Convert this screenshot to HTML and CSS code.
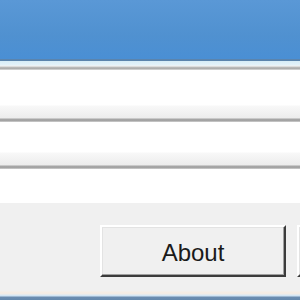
FILE: index.html
```html
<!DOCTYPE html>
<html>
<head>
<meta charset="utf-8">
<link rel="stylesheet" href="styles.css">
</head>
<body>
<div class="window">
  <div class="titlebar"></div>
  <div class="titleedge"></div>
  <div class="field"></div>
  <div class="field second"></div>
  <div class="gap"></div>
  <div class="panel">
    <button class="btn">About</button>
    <button class="btn"></button>
  </div>
  <div class="bottomedge"></div>
</div>
</body>
</html>
```

FILE: styles.css
```css
html, body {
  margin: 0;
  padding: 0;
  background: #ffffff;
}
.window {
  width: 300px;
  height: 300px;
  overflow: hidden;
  display: flex;
  flex-direction: column;
}
.titlebar {
  height: 59px;
  flex-shrink: 0;
  background: linear-gradient(#5a98d6, #5091d0 60%, #4a8fd4);
  border-bottom: 2px solid #5b84ad;
}
.titleedge {
  height: 9px;
  flex-shrink: 0;
  background: linear-gradient(#d6ecf7 0, #e4f2fa 4px, #f2f2f2 5px, #c8c8c8 6px, #a9a9a9 7px, #b4b4b4 8px, #e8e8e8 9px);
}
.field {
  height: 52px;
  flex-shrink: 0;
  background: linear-gradient(#ffffff 0, #ffffff 35px, #f8f8f8 36px, #ececec 48px, #a6a6a6 49px, #a3a3a3 51px, #e0e0e0 52px);
}
.field.second {
  height: 47px;
  background: linear-gradient(#ffffff 0, #ffffff 30px, #f8f8f8 31px, #ececec 43px, #a6a6a6 44px, #a3a3a3 46px, #e0e0e0 47px);
}
.gap {
  height: 34px;
  flex-shrink: 0;
  background: #ffffff;
}
.panel {
  flex: 1;
  background: #f0f0f0;
  display: flex;
  gap: 11px;
  padding: 22px 0 0 100px;
  box-sizing: border-box;
}
.btn {
  flex-shrink: 0;
  width: 186px;
  height: 52px;
  box-sizing: border-box;
  background: #f0f0f0;
  border-style: solid;
  border-width: 2px;
  border-color: #ffffff #3c3c3c #3c3c3c #ffffff;
  box-shadow: inset -1px -1px 0 #a0a0a0, inset 1px 1px 0 #e3e3e3;
  font-family: "Liberation Sans", Arial, sans-serif;
  font-size: 24px;
  color: #1a1a1a;
  padding: 4px 0 0 0;
  margin: 0;
}
.bottomedge {
  height: 11px;
  flex-shrink: 0;
  background: linear-gradient(#f0f0f0 0, #f0f0f0 2px, #f6ede4 3px, #f2ece6 5px, #d9e8f4 6px, #cfe3f3 7px, #6d8db0 8px, #6488ad 11px);
}
```
